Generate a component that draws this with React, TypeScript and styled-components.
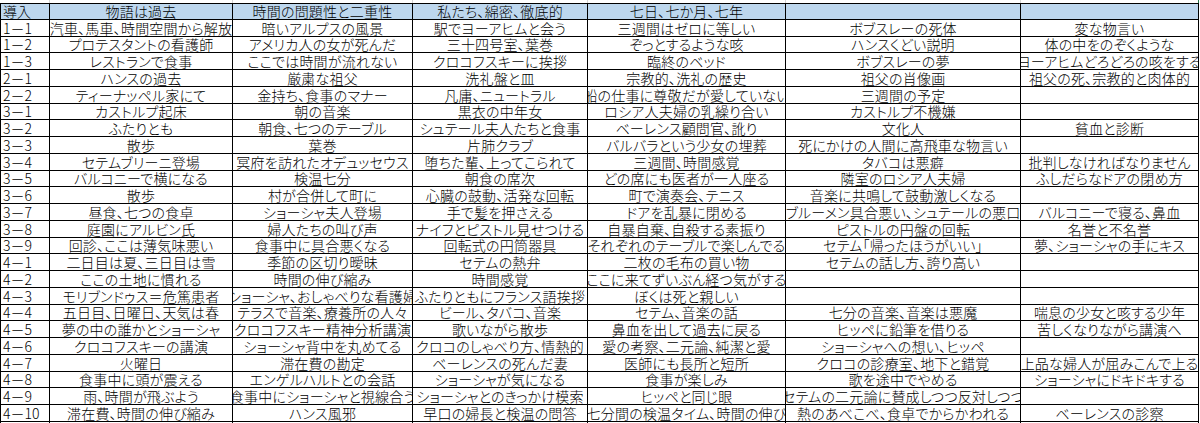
import React from 'react'
import styled, { createGlobalStyle } from 'styled-components'

const GlobalStyle = createGlobalStyle`
  html, body {
    margin: 0;
    padding: 0;
    background: #fff;
  }
  body {
    font-family: "Noto Sans CJK JP", "Noto Sans", sans-serif;
  }
`

// column widths, borders included (right border of each column lands on the sheet lines)
const COLS = [50, 183, 180, 175, 198, 235, 178]

const HEADER = ['導入', '物語は過去', '時間の問題性と二重性', '私たち、綿密、徹底的', '七日、七か月、七年', '', '']

const ROWS: string[][] = [
  ['1－1', '汽車、馬車、時間空間から解放', '暗いアルプスの風景', '駅でヨーアヒムと会う', '三週間はゼロに等しい', 'ボブスレーの死体', '変な物言い'],
  ['1－2', 'プロテスタントの看護師', 'アメリカ人の女が死んだ', '三十四号室、葉巻', 'ぞっとするような咳', 'ハンスくどい説明', '体の中をのぞくような'],
  ['1－3', 'レストランで食事', 'ここでは時間が流れない', 'クロコフスキーに挨拶', '臨終のベッド', 'ボブスレーの夢', 'ヨーアヒムどろどろの咳をする'],
  ['2－1', 'ハンスの過去', '厳粛な祖父', '洗礼盤と皿', '宗教的、洗礼の歴史', '祖父の肖像画', '祖父の死、宗教的と肉体的'],
  ['2－2', 'ティーナッペル家にて', '金持ち、食事のマナー', '凡庸、ニュートラル', '船の仕事に尊敬だが愛していない', '三週間の予定', ''],
  ['3－1', 'カストルプ起床', '朝の音楽', '黒衣の中年女', 'ロシア人夫婦の乳繰り合い', 'カストルプ不機嫌', ''],
  ['3－2', 'ふたりとも', '朝食、七つのテーブル', 'シュテール夫人たちと食事', 'ベーレンス顧問官、訛り', '文化人', '貧血と診断'],
  ['3－3', '散歩', '葉巻', '片肺クラブ', 'バルバラという少女の埋葬', '死にかけの人間に高飛車な物言い', ''],
  ['3－4', 'セテムブリーニ登場', '冥府を訪れたオデュッセウス', '堕ちた輩、上ってこられて', '三週間、時間感覚', 'タバコは悪癖', '批判しなければなりません'],
  ['3－5', 'バルコニーで横になる', '検温七分', '朝食の席次', 'どの席にも医者が一人座る', '隣室のロシア人夫婦', 'ふしだらなドアの閉め方'],
  ['3－6', '散歩', '村が合併して町に', '心臓の鼓動、活発な回転', '町で演奏会、テニス', '音楽に共鳴して鼓動激しくなる', ''],
  ['3－7', '昼食、七つの食卓', 'ショーシャ夫人登場', '手で髪を押さえる', 'ドアを乱暴に閉める', 'ブルーメン具合悪い、シュテールの悪口', 'バルコニーで寝る、鼻血'],
  ['3－8', '庭園にアルビン氏', '婦人たちの叫び声', 'ナイフとピストル見せつける', '自暴自棄、自殺する素振り', 'ピストルの円盤の回転', '名誉と不名誉'],
  ['3－9', '回診、ここは薄気味悪い', '食事中に具合悪くなる', '回転式の円筒器具', 'それぞれのテーブルで楽しんでる', 'セテム「帰ったほうがいい」', '夢、ショーシャの手にキス'],
  ['4－1', '二日目は夏、三日目は雪', '季節の区切り曖昧', 'セテムの熱弁', '二枚の毛布の買い物', 'セテムの話し方、誇り高い', ''],
  ['4－2', 'ここの土地に慣れる', '時間の伸び縮み', '時間感覚', 'ここに来てずいぶん経つ気がする', '', ''],
  ['4－3', 'モリブンドゥス＝危篤患者', 'ショーシャ、おしゃべりな看護婦', 'ふたりともにフランス語挨拶', 'ぼくは死と親しい', '', ''],
  ['4－4', '五日目、日曜日、天気は春', 'テラスで音楽、療養所の人々', 'ビール、タバコ、音楽', 'セテム、音楽の話', '七分の音楽、音楽は悪魔', '喘息の少女と咳する少年'],
  ['4－5', '夢の中の誰かとショーシャ', 'クロコフスキー精神分析講演', '歌いながら散歩', '鼻血を出して過去に戻る', 'ヒッペに鉛筆を借りる', '苦しくなりながら講演へ'],
  ['4－6', 'クロコフスキーの講演', 'ショーシャ背中を丸めてる', 'クロコのしゃべり方、情熱的', '愛の考察、二元論、純潔と愛', 'ショーシャへの想い、ヒッペ', ''],
  ['4－7', '火曜日', '滞在費の勘定', 'ベーレンスの死んだ妻', '医師にも長所と短所', 'クロコの診療室、地下と錯覚', '上品な婦人が屈みこんで上る'],
  ['4－8', '食事中に頭が震える', 'エンゲルハルトとの会話', 'ショーシャが気になる', '食事が楽しみ', '歌を途中でやめる', 'ショーシャにドキドキする'],
  ['4－9', '雨、時間が飛ぶよう', '食事中にショーシャと視線合う', 'ショーシャとのきっかけ模索', 'ヒッペと同じ眼', 'セテムの二元論に賛成しつつ反対しつつ', ''],
  ['4－10', '滞在費、時間の伸び縮み', 'ハンス風邪', '早口の婦長と検温の問答', '七分間の検温タイム、時間の伸び', '熱のあべこべ、食卓でからかわれる', 'ベーレンスの診察'],
]

const Sheet = styled.div`
  width: 1200px;
  height: 423px;
  overflow: hidden;
  background: #fff;
`

const Grid = styled.div`
  display: grid;
  grid-template-columns: ${COLS.map((c) => `${c}px`).join(' ')};
  grid-template-rows: 3px;
  grid-auto-rows: 16.76px;
`

// sliver of the row above the header, only gridlines visible
const Sliver = styled.div<{ $last?: boolean }>`
  box-sizing: border-box;
  border-right: 1px solid ${(p) => (p.$last ? '#217346' : '#d4d4d4')};
`

const Cell = styled.div<{ $left?: boolean; $head?: boolean; $first?: boolean }>`
  box-sizing: border-box;
  display: flex;
  align-items: center;
  justify-content: ${(p) => (p.$left ? 'flex-start' : 'center')};
  overflow-x: clip;
  overflow-y: visible;
  white-space: nowrap;
  padding-left: ${(p) => (p.$left ? '2px' : '0')};
  border-right: 1px solid #000;
  border-bottom: 1px solid #000;
  border-left: ${(p) => (p.$first ? '1px solid #000' : 'none')};
  border-top: ${(p) => (p.$head ? '1px solid #000' : 'none')};
  background: ${(p) => (p.$head ? '#bdd7ee' : '#fff')};
  color: #000;
  font-size: 14px;
  font-weight: 300;
  line-height: 1;
  font-feature-settings: ${(p) => (p.$left ? 'normal' : '"palt"')};
  letter-spacing: ${(p) => (p.$left ? '0' : '0.2px')};
`

const Text = styled.span`
  flex: none;
`

const Row = ({ cells, head }: { cells: string[]; head?: boolean }) => (
  <>
    {cells.map((t, i) => (
      <Cell key={i} $first={i === 0} $left={i === 0} $head={head}>
        <Text>{t}</Text>
      </Cell>
    ))}
  </>
)

export default function App() {
  return (
    <Sheet>
      <GlobalStyle />
      <Grid>
        {COLS.map((_, i) => (
          <Sliver key={i} $last={i === COLS.length - 1} />
        ))}
        <Row cells={HEADER} head />
        {ROWS.map((r, i) => (
          <Row key={i} cells={r} />
        ))}
        <Row cells={['', '', '', '', '', '', '']} />
      </Grid>
    </Sheet>
  )
}
